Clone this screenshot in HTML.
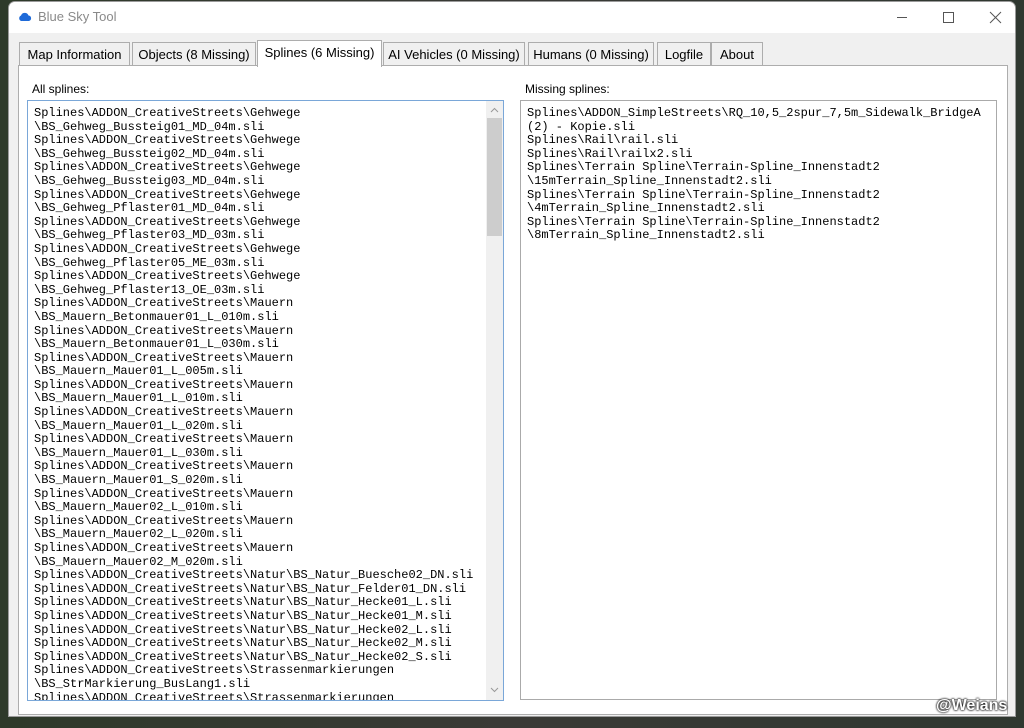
<!DOCTYPE html>
<html><head><meta charset="utf-8"><style>
*{margin:0;padding:0;box-sizing:border-box}
body{width:1024px;height:728px;overflow:hidden;background:linear-gradient(90deg,#2e3a2a,#3a3a36 50%,#2f3830);position:relative;font-family:"Liberation Sans",sans-serif}
.win{position:absolute;left:8px;top:1px;width:1008px;height:716px;background:#f0f0f0;border:1px solid #9a9a9a;border-radius:7px 7px 0 0;overflow:hidden}
.title{height:31px;background:#fff;position:relative}
.title .t{position:absolute;left:29px;top:7px;font-size:13px;color:#8a8a8a}
.tab{position:absolute;top:40px;height:24px;border:1px solid #adadad;border-bottom:none;background:#f0f0f0;font-size:13px;color:#000;padding:4px 0 0;text-align:center}
.tab.sel{top:38px;height:27px;background:#fff;z-index:2}
.panel{position:absolute;left:9px;top:63px;width:990px;height:650px;background:#fff;border:1px solid #adadad}
.lbl{position:absolute;font-size:12px;color:#000}
.box{position:absolute;border:1px solid #aaa;background:#fff;overflow:hidden;font-family:"Liberation Mono",monospace;font-size:12px;line-height:13.6px;white-space:pre;padding:6px 6px;color:#000}
</style></head><body>
<div class="win">
 <div class="title">
  <svg style="position:absolute;left:9px;top:10px" width="14" height="9" viewBox="0 0 14 9"><path d="M3 9 A3 3 0 0 1 3 3.5 A4 4 0 0 1 10.5 3.5 A2.8 2.8 0 0 1 11 9Z" fill="#1e6ad8"/></svg>
  <div class="t">Blue Sky Tool</div>
  <svg style="position:absolute;left:880px;top:8px" width="120" height="16" viewBox="0 0 120 16"><path d="M8 7.5H18" stroke="#555" stroke-width="1"/><rect x="54.5" y="2.5" width="10" height="10" fill="none" stroke="#555"/><path d="M101 2L112 13M112 2L101 13" stroke="#555" stroke-width="1"/></svg>
 </div>
 <div class="tab" style="left:10px;width:111px">Map Information</div>
 <div class="tab" style="left:123px;width:124px">Objects (8 Missing)</div>
 <div class="tab sel" style="left:248px;width:125px">Splines (6 Missing)</div>
 <div class="tab" style="left:374px;width:142px">AI Vehicles (0 Missing)</div>
 <div class="tab" style="left:519px;width:126px">Humans (0 Missing)</div>
 <div class="tab" style="left:648px;width:54px">Logfile</div>
 <div class="tab" style="left:702px;width:52px">About</div>
 <div class="panel"></div>
</div>
<div class="lbl" style="left:32px;top:82px">All splines:</div>
<div class="lbl" style="left:525px;top:82px">Missing splines:</div>
<div class="box" style="left:27px;top:100px;width:477px;height:601px;border-color:#7aa7d8">Splines\ADDON_CreativeStreets\Gehwege
\BS_Gehweg_Bussteig01_MD_04m.sli
Splines\ADDON_CreativeStreets\Gehwege
\BS_Gehweg_Bussteig02_MD_04m.sli
Splines\ADDON_CreativeStreets\Gehwege
\BS_Gehweg_Bussteig03_MD_04m.sli
Splines\ADDON_CreativeStreets\Gehwege
\BS_Gehweg_Pflaster01_MD_04m.sli
Splines\ADDON_CreativeStreets\Gehwege
\BS_Gehweg_Pflaster03_MD_03m.sli
Splines\ADDON_CreativeStreets\Gehwege
\BS_Gehweg_Pflaster05_ME_03m.sli
Splines\ADDON_CreativeStreets\Gehwege
\BS_Gehweg_Pflaster13_OE_03m.sli
Splines\ADDON_CreativeStreets\Mauern
\BS_Mauern_Betonmauer01_L_010m.sli
Splines\ADDON_CreativeStreets\Mauern
\BS_Mauern_Betonmauer01_L_030m.sli
Splines\ADDON_CreativeStreets\Mauern
\BS_Mauern_Mauer01_L_005m.sli
Splines\ADDON_CreativeStreets\Mauern
\BS_Mauern_Mauer01_L_010m.sli
Splines\ADDON_CreativeStreets\Mauern
\BS_Mauern_Mauer01_L_020m.sli
Splines\ADDON_CreativeStreets\Mauern
\BS_Mauern_Mauer01_L_030m.sli
Splines\ADDON_CreativeStreets\Mauern
\BS_Mauern_Mauer01_S_020m.sli
Splines\ADDON_CreativeStreets\Mauern
\BS_Mauern_Mauer02_L_010m.sli
Splines\ADDON_CreativeStreets\Mauern
\BS_Mauern_Mauer02_L_020m.sli
Splines\ADDON_CreativeStreets\Mauern
\BS_Mauern_Mauer02_M_020m.sli
Splines\ADDON_CreativeStreets\Natur\BS_Natur_Buesche02_DN.sli
Splines\ADDON_CreativeStreets\Natur\BS_Natur_Felder01_DN.sli
Splines\ADDON_CreativeStreets\Natur\BS_Natur_Hecke01_L.sli
Splines\ADDON_CreativeStreets\Natur\BS_Natur_Hecke01_M.sli
Splines\ADDON_CreativeStreets\Natur\BS_Natur_Hecke02_L.sli
Splines\ADDON_CreativeStreets\Natur\BS_Natur_Hecke02_M.sli
Splines\ADDON_CreativeStreets\Natur\BS_Natur_Hecke02_S.sli
Splines\ADDON_CreativeStreets\Strassenmarkierungen
\BS_StrMarkierung_BusLang1.sli
Splines\ADDON_CreativeStreets\Strassenmarkierungen</div>
<div style="position:absolute;left:486px;top:101px;width:17px;height:599px;background:#f0f0f0"></div>
<div style="position:absolute;left:487px;top:118px;width:15px;height:118px;background:#cdcdcd"></div>
<svg style="position:absolute;left:486px;top:101px" width="17" height="599"><path d="M5 11L8.5 7.5L12 11" stroke="#999" fill="none"/><path d="M5 587L8.5 590.5L12 587" stroke="#999" fill="none"/></svg>
<div class="box" style="left:520px;top:100px;width:477px;height:600px">Splines\ADDON_SimpleStreets\RQ_10,5_2spur_7,5m_Sidewalk_BridgeA
(2) - Kopie.sli
Splines\Rail\rail.sli
Splines\Rail\railx2.sli
Splines\Terrain Spline\Terrain-Spline_Innenstadt2
\15mTerrain_Spline_Innenstadt2.sli
Splines\Terrain Spline\Terrain-Spline_Innenstadt2
\4mTerrain_Spline_Innenstadt2.sli
Splines\Terrain Spline\Terrain-Spline_Innenstadt2
\8mTerrain_Spline_Innenstadt2.sli</div>
<div style="position:absolute;left:936px;top:697px;font-size:16px;font-weight:bold;color:#fff;text-shadow:0 0 2px #000,0 0 2px #000">@Weians</div>
</body></html>
